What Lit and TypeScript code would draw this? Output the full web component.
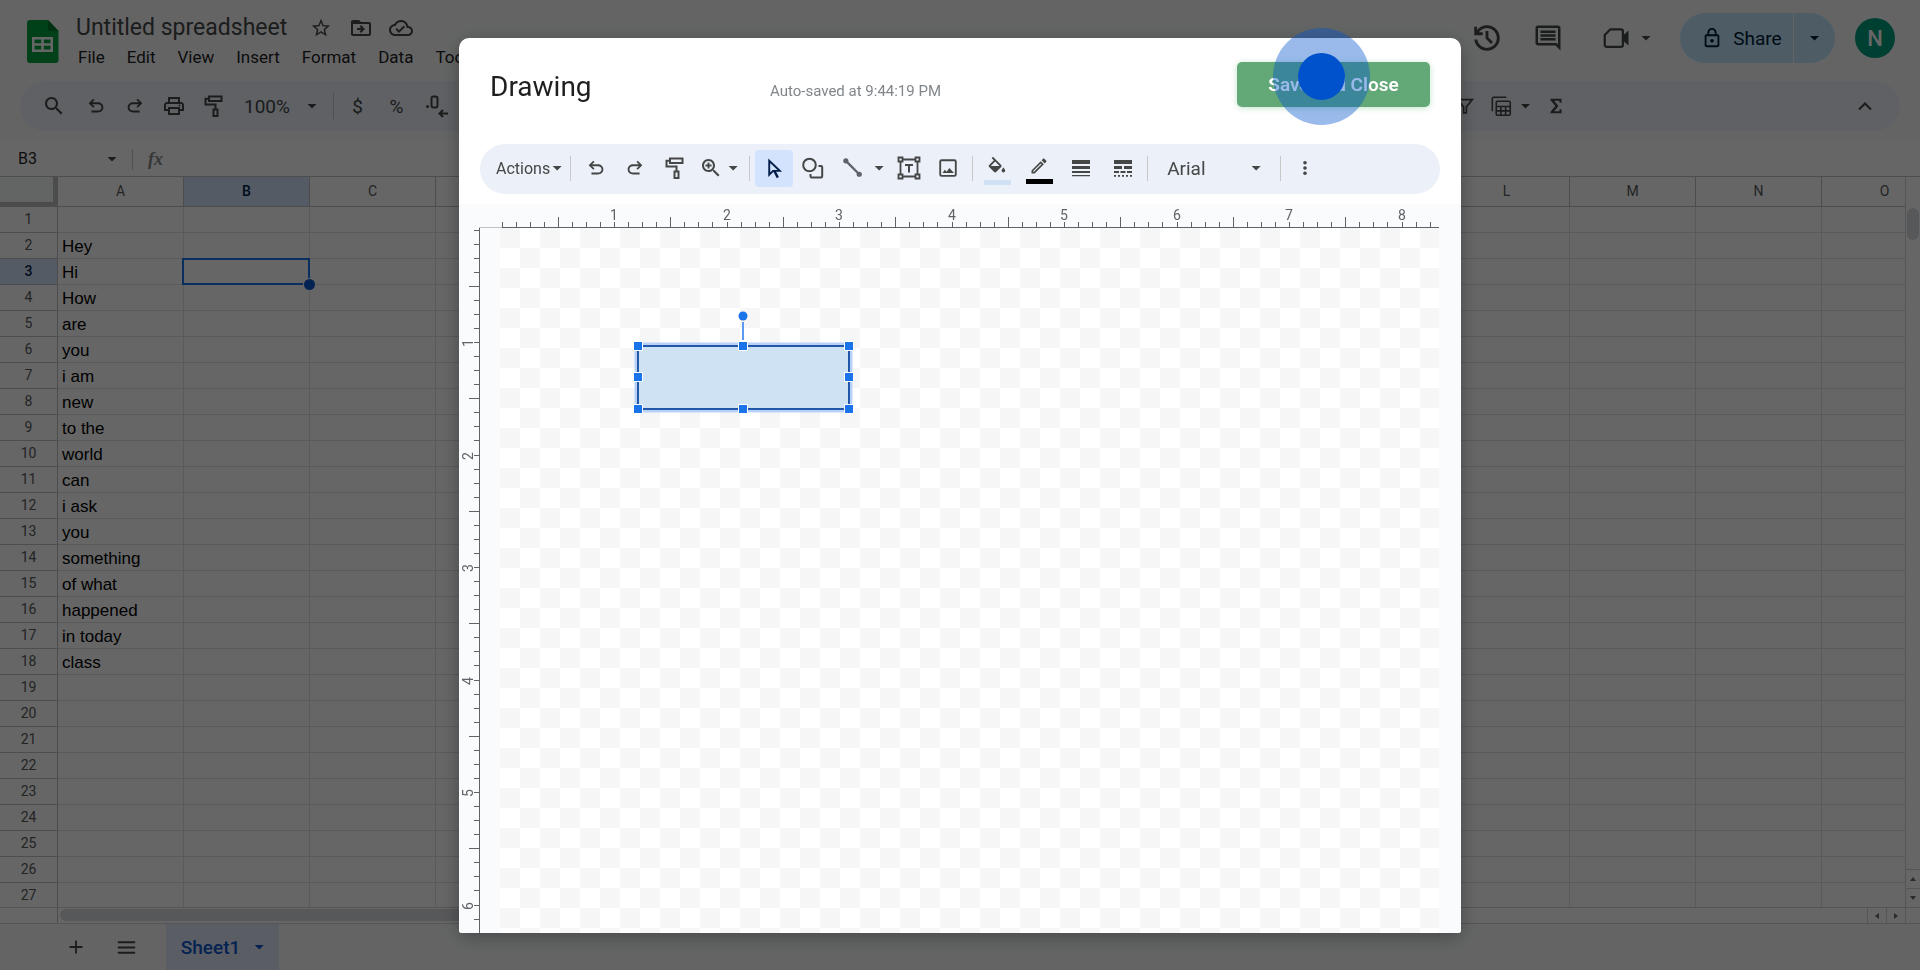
import { LitElement, html, css, svg, nothing } from "lit";
import { customElement, property } from "lit/decorators.js";
import { classMap } from "lit/directives/class-map.js";

const SEARCH =
  "M15.5 14h-.79l-.28-.27C15.41 12.59 16 11.11 16 9.5 16 5.91 13.09 3 9.5 3S3 5.91 3 9.5 5.91 16 9.5 16c1.61 0 3.09-.59 4.23-1.57l.27.28v.79l5 4.99L20.49 19l-4.99-5zm-6 0C7.01 14 5 11.99 5 9.5S7.01 5 9.5 5 14 7.01 14 9.5 11.99 14 9.5 14z";
const UNDO =
  "M7 19v-2h7.1c1.05 0 1.96-.33 2.74-1s1.16-1.5 1.16-2.5-.39-1.83-1.16-2.5-1.69-1-2.74-1H7.8l2.6 2.6L9 14 4 9l5-5 1.4 1.4L7.8 8h6.3c1.62 0 3 .53 4.16 1.575S20 11.933 20 13.5s-.58 2.88-1.74 3.925S15.72 19 14.1 19z";

const ICONS: Record<string, unknown> = {
  search: svg`<path d=${SEARCH} />`,
  zoomIn: svg`<path d=${SEARCH} /><path d="M8.6 6.5h1.8v2.1h2.1v1.8h-2.1v2.1H8.6v-2.1H6.500V8.600h2.100z" />`,
  undo: svg`<path d=${UNDO} />`,
  redo: svg`<path d=${UNDO} transform="matrix(-1 0 0 1 24 0)" />`,
  print: svg`<path d="M19 8h-1V3H6v5H5c-1.66 0-3 1.34-3 3v6h4v4h12v-4h4v-6c0-1.66-1.34-3-3-3zM8 5h8v3H8V5zm8 12v2H8v-4h8v2zm2-2v-2H6v2H4v-4c0-.55.45-1 1-1h14c.55 0 1 .45 1 1v4h-2z" /><circle cx="17.500" cy="11.500" r="1" />`,
  paint: svg`<g fill="none" stroke="currentColor" stroke-width="2"><path d="M8 2.500h12.500v4.500H8z" /><path d="M8 4.700H4.500V10.500h10V15" /><path d="M12.500 15.500h4v6.500h-4z" /></g>`,
  star: svg`<path d="M22 9.24l-7.19-.62L12 2 9.19 8.63 2 9.24l5.46 4.73L5.82 21 12 17.27 18.18 21l-1.63-7.03L22 9.24zM12 15.400l-3.760 2.270 1-4.280-3.320-2.880 4.380-.380L12 6.100l1.710 4.040 4.380.380-3.320 2.880 1 4.280L12 15.400z" />`,
  move: svg`<path d="M20 6h-8l-2-2H4c-1.100 0-2 .9-2 2v12c0 1.100.9 2 2 2h16c1.100 0 2-.9 2-2V8c0-1.100-.9-2-2-2zm0 12H4V8h16v10z" /><path d="M12.160 12H8v2h4.160l-1.590 1.590L11.990 17 16 13.010 11.990 9l-1.410 1.410L12.160 12z" />`,
  cloud: svg`<path d="M19.350 10.040C18.670 6.590 15.640 4 12 4 9.110 4 6.600 5.640 5.350 8.040 2.340 8.360 0 10.910 0 14c0 3.310 2.690 6 6 6h13c2.760 0 5-2.240 5-5 0-2.640-2.050-4.780-4.650-4.960zM19 18H6c-2.210 0-4-1.790-4-4 0-2.050 1.530-3.760 3.560-3.970l1.070-.11.5-.95C8.080 7.140 9.940 6 12 6c2.620 0 4.880 1.860 5.390 4.430l.3 1.500 1.530.11c1.560.1 2.780 1.410 2.780 2.960 0 1.650-1.350 3-3 3z" /><path d="M10 14.180l-2.090-2.090L6.500 13.500 10 17l6.010-6.010-1.410-1.410z" />`,
  history: svg`<path d="M12 21q-3.45 0-6.0125-2.2875T3.05 13H5.1q.35 2.6 2.3125 4.3T12 19q2.925 0 4.9625-2.0375T19 12t-2.0375-4.9625T12 5q-1.725 0-3.225.8T6.25 8H9v2H3V4h2v2.35q1.275-1.6 3.1125-2.475T12 3q1.875 0 3.5125.7125t2.85 1.925 1.925 2.85T21 12t-.7125 3.5125-1.925 2.85-2.85 1.925T12 21Zm2.8-4.8L11 12.4V7h2v4.6l3.2 3.2-1.4 1.4Z" />`,
  comment: svg`<path d="M21.990 4c0-1.100-.89-2-1.990-2H4c-1.100 0-2 .9-2 2v12c0 1.100.9 2 2 2h14l4 4-.010-18zM20 4v13.170L18.830 16H4V4h16zM6 12h12v2H6zm0-3h12v2H6zm0-3h12v2H6z" />`,
  video: svg`<path d="M7.500 5H16a1.500 1.500 0 0 1 1.500 1.500v11A1.500 1.500 0 0 1 16 19H4.500A1.500 1.500 0 0 1 3 17.500V9.500z" fill="none" stroke="currentColor" stroke-width="1.800" /><path d="M17 10.500l5-4.500v12l-5-4.500z" />`,
  lock: svg`<path d="M18 8h-1V6c0-2.760-2.240-5-5-5S7 3.240 7 6v2H6c-1.100 0-2 .9-2 2v10c0 1.100.9 2 2 2h12c1.100 0 2-.9 2-2V10c0-1.100-.9-2-2-2zM9 6c0-1.660 1.340-3 3-3s3 1.340 3 3v2H9V6zm9 14H6V10h12v10zm-6-3c1.100 0 2-.9 2-2s-.9-2-2-2-2 .9-2 2 .9 2 2 2z" />`,
  decrease: svg`<circle cx="3.500" cy="12.500" r="1.500" /><path d="M9.500 2.500h2a2 2 0 0 1 2 2v7a2 2 0 0 1-2 2h-2a2 2 0 0 1-2-2v-7a2 2 0 0 1 2-2z" fill="none" stroke="currentColor" stroke-width="2" /><path d="M24 19.500h-8M19 16l-3.500 3.500L19 23" fill="none" stroke="currentColor" stroke-width="2" />`,
  filter: svg`<path d="M4 5h16l-6.500 8v6.500h-3V13z" fill="none" stroke="currentColor" stroke-width="1.800" />`,
  calc: svg`<g fill="none" stroke="currentColor" stroke-width="1.800"><path d="M1.500 17.500V3a1.500 1.500 0 0 1 1.500-1.500h14.500" /><rect x="6" y="6" width="16" height="16" rx="1.500" /><path d="M6 12h16M6 17h16M11.300 12v10M16.700 12v10" /></g>`,
  sigma: svg`<path d="M6 4h12v4.500h-2.200V6.300H10l4.700 5.700L10 17.700h5.800v-2.200H18V20H6v-1.800l5.300-6.200L6 5.800z" />`,
  up: svg`<path d="M6 15.500l6-6 6 6" fill="none" stroke="currentColor" stroke-width="2" />`,
  plus: svg`<path d="M11 5h2v6h6v2h-6v6h-2v-6H5v-2h6z" />`,
  bars: svg`<path d="M3 5.500h18v2H3zM3 11h18v2H3zM3 16.500h18v2H3z" />`,
  cursor: svg`<path d="M6.500 4v14.500l4-4h7z" fill="none" stroke="currentColor" stroke-width="2" /><path d="M11.500 14l4 7.500" stroke="currentColor" stroke-width="2.500" />`,
  shapes: svg`<g fill="none" stroke="currentColor" stroke-width="2"><circle cx="8.500" cy="9" r="6.300" /><path d="M17.500 10H20a1.200 1.200 0 0 1 1.200 1.200v9a1.200 1.200 0 0 1-1.200 1.200H10.700a1.200 1.200 0 0 1-1.200-1.200V18" /></g>`,
  line: svg`<g fill="#5f6368"><circle cx="4" cy="4" r="2.700" /><circle cx="18" cy="18" r="2.700" /><path d="M4 4l14 14" stroke="#5f6368" stroke-width="2.400" /></g>`,
  textbox: svg`<g fill="none" stroke="currentColor" stroke-width="1.800"><path d="M5.500 3.500h13M5.500 20.500h13M3.500 5.500v13M20.500 5.500v13" /><path d="M1.500 1.500h4v4h-4zM18.500 1.500h4v4h-4zM1.500 18.500h4v4h-4zM18.500 18.500h4v4h-4z" /></g><path d="M8 8h8v2h-3v6.500h-2V10H8z" />`,
  image: svg`<rect x="3.500" y="3.500" width="17" height="17" rx="1.500" fill="none" stroke="currentColor" stroke-width="2" /><path d="M6 17.500l2.500-3.500 2 2 3-4 5 5.500z" />`,
  fill: svg`<path transform="translate(0 2)" d="M16.560 8.940L7.620 0 6.210 1.410l2.380 2.380-5.150 5.150c-.59.59-.59 1.540 0 2.120l5.500 5.500c.29.29.68.44 1.060.44s.77-.15 1.060-.44l5.500-5.500c.59-.58.59-1.530 0-2.120zM5.210 10L10 5.210 14.790 10H5.210zM19 11.500s-2 2.170-2 3.500c0 1.100.9 2 2 2s2-.9 2-2c0-1.330-2-3.500-2-3.500z" />`,
  pen: svg`<path d="M14.060 9.020l.92.92L5.920 19H5v-.92l9.060-9.060M17.660 3c-.25 0-.51.1-.7.29l-1.830 1.830 3.750 3.750 1.830-1.830c.39-.39.39-1.020 0-1.410l-2.340-2.340c-.2-.2-.45-.29-.71-.29zm-3.600 3.190L3 17.250V21h3.750L17.810 9.940l-3.750-3.750z" />`,
  weight: svg`<path d="M3 4h18v4H3zM3 10h18v3H3zM3 15h18v2H3zM3 19h18v1.200H3z" />`,
  dash: svg`<path d="M3 4h18v4H3zM3 10h8v3H3zM13 10h8v3h-8zM3 15h5v2H3zM9.500 15h5v2h-5zM16 15h5v2h-5zM3 19h2v1.700H3zM7 19h2v1.700H7zM11 19h2v1.700h-2zM15 19h2v1.700h-2zM19 19h2v1.700h-2z" />`,
  dots: svg`<circle cx="12" cy="5" r="2.400" /><circle cx="12" cy="12" r="2.400" /><circle cx="12" cy="19" r="2.400" />`,
};

const icon = (name: string, size = 24) =>
  html`<svg width=${size} height=${size} viewBox="0 0 24 24" fill="currentColor" aria-hidden="true">${ICONS[name]}</svg>`;

const shared = css`
  * {
    box-sizing: border-box;
  }
  button,
  input,
  select {
    margin: 0;
    padding: 0;
    border: 0;
    background: none;
    color: inherit;
    font: inherit;
    border-radius: 0;
  }
  button {
    display: inline-flex;
    align-items: center;
    justify-content: center;
    cursor: pointer;
  }
  svg {
    display: block;
    flex: none;
  }
  select {
    appearance: none;
    cursor: pointer;
  }
  .caret {
    flex: none;
    width: 10px;
    height: 5px;
    background: currentColor;
    clip-path: polygon(0 0, 100% 0, 50% 100%);
    pointer-events: none;
  }
  .divider {
    flex: none;
    width: 1px;
    background: #c7c7c7;
  }
  .pick {
    display: inline-flex;
    align-items: center;
  }
`;

const CELLS = [
  "", "Hey", "Hi", "How", "are", "you", "i am", "new", "to the", "world", "can", "i ask",
  "you", "something", "of what", "happened", "in today", "class", "", "", "", "", "", "", "", "", "",
];
const COLUMNS = "ABCDEFGHIJKLMNO".split("");

@customElement("sheet-header")
class SheetHeader extends LitElement {
  static styles = [
    shared,
    css`
      :host {
        display: block;
        color: #444746;
      }
      .top {
        display: flex;
        height: 81px;
        padding: 0 25px 0 23px;
      }
      .logo {
        padding-top: 20px;
        width: 53px;
      }
      .names {
        padding-top: 13px;
      }
      .title-row {
        display: flex;
        align-items: center;
        height: 30px;
        gap: 16px;
      }
      .title {
        width: 217px;
        font-size: 23px;
        line-height: 28px;
      }
      .title-row button {
        width: 24px;
        height: 24px;
      }
      .menus {
        display: flex;
        gap: 22px;
        padding-left: 2px;
        color: #1f1f1f;
        font-size: 17px;
        line-height: 28px;
      }
      .tools {
        display: flex;
        align-items: center;
        margin-left: auto;
        height: 50px;
        margin-top: 13px;
      }
      .history {
        margin-right: 29px;
      }
      .comments {
        margin-right: 38px;
      }
      .meet {
        gap: 10px;
        margin-right: 29px;
      }
      .share {
        display: flex;
        height: 50px;
        border-radius: 25px;
        overflow: hidden;
        color: #001d35;
        margin-right: 20px;
        gap: 1px;
        font-size: 19px;
      }
      .share button {
        background: #c2e7ff;
      }
      .share-main {
        gap: 10px;
        width: 113px;
        padding-left: 10px;
      }
      .share-more {
        width: 41px;
      }
      .avatar {
        width: 40px;
        height: 40px;
        border-radius: 50%;
        background: #00a080;
        color: #fff;
        font-size: 22px;
        font-weight: 500;
      }
      .bar {
        display: flex;
        align-items: center;
        height: 50px;
        margin: 0 20px;
        padding: 0 16px 0 14px;
        border-radius: 25px;
        background: #edf2fa;
        font-size: 19px;
      }
      .bar button {
        width: 39px;
        height: 36px;
      }
      .bar .find {
        margin-right: 3px;
      }
      .zoom {
        margin-left: 12px;
      }
      .zoom select {
        width: 63px;
      }
      .bar .divider {
        height: 26px;
        margin: 0 4px 0 16px;
      }
      .bar .group {
        display: flex;
        align-items: center;
        margin-left: auto;
        width: 439px;
      }
      .bar .more {
        width: 44px;
        gap: 9px;
        margin-right: 8px;
        padding-left: 9px;
      }
      .bar .collapse {
        margin-left: auto;
      }
      .formula {
        display: flex;
        align-items: center;
        height: 36px;
        margin-top: 9px;
        background: #fff;
        padding: 2px 0 0 18px;
      }
      .cell-name {
        width: 89px;
        color: #1f1f1f;
        font-size: 16px;
        line-height: 20px;
      }
      .formula .divider {
        height: 21px;
        margin: 0 15px;
      }
      .fx {
        font: italic 700 18px/20px "Liberation Serif", serif;
        color: #8a8a8a;
      }
      .entry {
        flex: 1;
        margin-left: 10px;
      }
    `,
  ];

  render() {
    return html`
      <header class="top">
        <div class="logo">
          <svg width="40" height="44" viewBox="0 0 40 44" aria-hidden="true">
            <path d="M7 0h18l10.500 11v29a3 3 0 0 1-3 3H7a3 3 0 0 1-3-3V3a3 3 0 0 1 3-3z" fill="#00a33f" />
            <path d="M25 0l10.500 11H25z" fill="#007a2c" />
            <path d="M9 17h21v15H9zM11.500 19.500v3.800h6.700v-3.800zM20.800 19.500v3.800h6.700v-3.800zM11.500 25.800v3.700h6.700v-3.700zM20.800 25.800v3.700h6.700v-3.700z" fill="#fff" fill-rule="evenodd" />
          </svg>
        </div>
        <div class="names">
          <div class="title-row">
            <input class="title" aria-label="Rename" value="Untitled spreadsheet" />
            <button aria-label="Star">${icon("star", 22)}</button>
            <button aria-label="Move">${icon("move")}</button>
            <button aria-label="Document status">${icon("cloud")}</button>
          </div>
          <nav class="menus">
            ${["File", "Edit", "View", "Insert", "Format", "Data", "Tools"].map((m) => html`<button>${m}</button>`)}
          </nav>
        </div>
        <div class="tools">
          <button class="history" aria-label="Version history">${icon("history", 34)}</button>
          <button class="comments" aria-label="Comments">${icon("comment", 30)}</button>
          <button class="meet" aria-label="Join a call">${icon("video", 30)}<span class="caret"></span></button>
          <div class="share">
            <button class="share-main">${icon("lock", 22)}Share</button>
            <button class="share-more" aria-label="Share options"><span class="caret"></span></button>
          </div>
          <button class="avatar" aria-label="Account">N</button>
        </div>
      </header>
      <div class="bar" role="toolbar">
        <button class="find" aria-label="Search">${icon("search")}</button>
        <button aria-label="Undo">${icon("undo", 22)}</button>
        <button aria-label="Redo">${icon("redo", 22)}</button>
        <button aria-label="Print">${icon("print")}</button>
        <button aria-label="Paint format">${icon("paint")}</button>
        <span class="pick zoom">
          <select aria-label="Zoom"><option>100%</option></select><span class="caret"></span>
        </span>
        <span class="divider"></span>
        <button aria-label="Currency">$</button>
        <button aria-label="Percent">%</button>
        <button aria-label="Fewer decimals">${icon("decrease")}</button>
        <div class="group">
          <button aria-label="Filter">${icon("filter", 22)}</button>
          <button class="more" aria-label="Filter views">${icon("calc", 21)}<span class="caret"></span></button>
          <button aria-label="Functions">${icon("sigma", 22)}</button>
          <button class="collapse" aria-label="Hide the menus">${icon("up")}</button>
        </div>
      </div>
      <div class="formula">
        <input class="cell-name" aria-label="Name box" value="B3" /><span class="caret"></span>
        <span class="divider"></span>
        <span class="fx">fx</span>
        <input class="entry" aria-label="Formula" />
      </div>
    `;
  }
}

@customElement("sheet-grid")
class SheetGrid extends LitElement {
  static styles = [
    shared,
    css`
      :host {
        display: grid;
        grid-template-columns: minmax(0, 1fr) 15px;
        grid-template-rows: minmax(0, 1fr) 16px;
        border-top: 1px solid #c0c0c0;
        background: #fff;
        overflow: hidden;
      }
      .view {
        overflow: hidden;
      }
      table {
        table-layout: fixed;
        width: 1948px;
        border-collapse: separate;
        border-spacing: 0;
      }
      th,
      td {
        padding: 0;
        border-right: 1px solid #e1e1e1;
        border-bottom: 1px solid #e1e1e1;
      }
      th {
        border-color: #c0c0c0;
        color: #575a5a;
        font-size: 14px;
        font-weight: 400;
        text-align: center;
      }
      .side {
        width: 58px;
      }
      thead th {
        height: 30px;
        padding-bottom: 2px;
      }
      tbody tr {
        height: 26px;
      }
      tbody th {
        padding-bottom: 2px;
        line-height: 16px;
      }
      td {
        position: relative;
        padding: 2px 0 1px 4px;
        font: 17px/19px "Liberation Sans", Arial, sans-serif;
        color: #000;
        height: 26px;
        white-space: nowrap;
      }
      .corner {
        background: #f8f9fa;
        border-right: 5px solid #bdbdbd;
        border-bottom: 5px solid #bdbdbd;
      }
      th.on {
        background: #d3e3fd;
        color: #041e49;
        font-weight: 500;
      }
      .active {
        position: absolute;
        z-index: 1;
        inset: -1px -1px -1px -2px;
        border: 2px solid #1a73e8;
      }
      .active::after {
        content: "";
        position: absolute;
        right: -7px;
        bottom: -7px;
        width: 11px;
        height: 11px;
        border-radius: 50%;
        background: #0b57d0;
        box-shadow: 0 0 0 1px #fff;
      }
      .vbar {
        display: flex;
        flex-direction: column;
        border-left: 1px solid #d5d5d5;
      }
      .vbar .thumb {
        margin: 31px 1px auto;
        height: 32px;
      }
      .thumb {
        border-radius: 6px;
        background: #dadce0;
      }
      .step {
        color: #6b6b6b;
        width: 19px;
      }
      .vbar .step {
        width: 14px;
        height: 19px;
        border-top: 1px solid #d5d5d5;
      }
      .hbar {
        display: flex;
        border-top: 1px solid #d5d5d5;
      }
      .hbar .start {
        width: 58px;
        border-right: 1px solid #c0c0c0;
      }
      .hbar .thumb {
        width: 720px;
        margin: 1px auto 2px 2px;
      }
      .hbar .step,
      .end {
        border-left: 1px solid #d5d5d5;
      }
      .end {
        border-top: 1px solid #d5d5d5;
      }
    `,
  ];

  private step(points: string, label: string) {
    return html`<button class="step" aria-label=${label}>
      <svg width="8" height="8" viewBox="0 0 8 8" fill="currentColor"><path d=${points} /></svg>
    </button>`;
  }

  render() {
    return html`
      <div class="view">
        <table>
          <thead>
            <tr>
              <th class="side corner"></th>
              ${COLUMNS.map((c) => html`<th scope="col" class=${classMap({ on: c === "B" })}>${c}</th>`)}
            </tr>
          </thead>
          <tbody>
            ${CELLS.map(
              (text, row) => html`<tr>
                <th scope="row" class=${classMap({ on: row === 2 })}>${row + 1}</th>
                ${COLUMNS.map(
                  (_, col) =>
                    html`<td>${col === 0 ? text : nothing}${row === 2 && col === 1 ? html`<div class="active"></div>` : nothing}</td>`,
                )}
              </tr>`,
            )}
          </tbody>
        </table>
      </div>
      <div class="vbar">
        <div class="thumb"></div>
        ${this.step("M1 6h6L4 2z", "Scroll up")} ${this.step("M1 2h6L4 6z", "Scroll down")}
      </div>
      <div class="hbar">
        <div class="start"></div>
        <div class="thumb"></div>
        ${this.step("M6 1v6L2 4z", "Scroll left")} ${this.step("M2 1v6l4-3z", "Scroll right")}
      </div>
      <div class="end"></div>
    `;
  }
}

@customElement("sheet-tabs")
class SheetTabs extends LitElement {
  static styles = [
    shared,
    css`
      :host {
        display: flex;
        height: 47px;
        padding-left: 59px;
        border-top: 1px solid #d5d5d5;
        color: #444746;
      }
      .tool {
        width: 34px;
      }
      .all {
        margin: 0 23px 0 16px;
      }
      .tab {
        gap: 14px;
        width: 113px;
        height: 46px;
        background: #e1e9f7;
        color: #0b57d0;
        font-size: 19px;
        font-weight: 500;
      }
    `,
  ];

  render() {
    return html`
      <button class="tool" aria-label="Add sheet">${icon("plus", 22)}</button>
      <button class="tool all" aria-label="All sheets">${icon("bars", 23)}</button>
      <button class="tab">Sheet1<span class="caret"></span></button>
    `;
  }
}

@customElement("drawing-dialog")
class DrawingDialog extends LitElement {
  static styles = [
    shared,
    css`
      :host {
        display: flex;
        flex-direction: column;
        width: 1002px;
        max-width: 100%;
        border-radius: 10px 10px 3px 3px;
        background: #fff;
        box-shadow: 0 4px 20px rgba(0, 0, 0, 0.3);
        color: #444746;
      }
      header {
        display: flex;
        align-items: center;
        height: 106px;
        padding: 0 31px 13px;
      }
      h1 {
        flex: 0 0 280px;
        margin: 5px 0 0;
        color: #1f1f1f;
        font-size: 28px;
        line-height: 36px;
        font-weight: 400;
      }
      .status {
        margin: 13px 0 0;
        color: #80868b;
        font-family: Roboto, sans-serif;
        font-size: 15px;
        line-height: 20px;
      }
      .save-wrap {
        position: relative;
        margin-left: auto;
      }
      .save {
        width: 193px;
        height: 45px;
        border-radius: 5px;
        background: #63a877;
        box-shadow: 0 1px 6px rgba(52, 168, 83, 0.3);
        color: #fff;
        font-size: 19px;
        font-weight: 600;
      }
      .pulse {
        position: absolute;
        left: 36px;
        top: -34px;
        display: grid;
        place-items: center;
        width: 97px;
        height: 97px;
        border-radius: 50%;
        background: rgba(0, 82, 204, 0.4);
        pointer-events: none;
      }
      .pulse::after {
        content: "";
        width: 47px;
        height: 47px;
        border-radius: 50%;
        background: #0052cc;
      }
      .bar {
        display: flex;
        align-items: center;
        height: 50px;
        margin: 0 21px 10px;
        padding: 0 0 2px 16px;
        border-radius: 25px;
        background: #ecf1f9;
      }
      .bar .divider {
        height: 25px;
        margin: 0 5px;
      }
      .group {
        display: flex;
        align-items: center;
      }
      .group button {
        width: 38px;
        height: 37px;
      }
      .bar .actions {
        width: auto;
        gap: 2px;
        margin-right: 2px;
        font-size: 16px;
      }
      .group .combo {
        justify-content: flex-start;
        width: 50px;
        gap: 5px;
        padding-left: 5px;
      }
      .group .lines {
        width: 56px;
        gap: 9px;
        padding-left: 9px;
      }
      .edit-group,
      .insert-group {
        gap: 1px;
      }
      .style-group {
        gap: 4px;
      }
      .bar .selected {
        border-radius: 4px;
        background: #d3e3fd;
        color: #041e49;
      }
      .bar .ink {
        flex-direction: column;
        gap: 3px;
        height: 35px;
        padding-top: 4px;
      }
      .swatch {
        width: 27px;
        height: 5px;
        background: #cfe2f3;
      }
      .swatch.black {
        background: #000;
      }
      .font {
        margin: 0 14px;
        font-size: 19px;
      }
      .font select {
        width: 84px;
      }
      .work {
        flex: 1;
        min-height: 0;
        display: grid;
        grid-template-columns: 20px 21px minmax(0, 1fr) 22px;
        grid-template-rows: 24px minmax(0, 1fr);
        border-radius: 0 0 3px 3px;
        background: #f9fbfd;
        overflow: hidden;
      }
      .ruler {
        width: 100%;
        height: 100%;
        overflow: hidden;
        font-size: 14px;
        fill: #5f6368;
      }
      .across {
        grid-column: 2 / 4;
        grid-row: 1;
      }
      .down {
        grid-column: 1 / 3;
        grid-row: 2;
      }
      .canvas {
        position: relative;
        grid-column: 3;
        grid-row: 2;
        background: repeating-conic-gradient(#fff 0 25%, #f6f6f6 0 50%) 0 0 / 40px 40px;
      }
      .shape {
        position: absolute;
        left: 128px;
        top: 78px;
      }
    `,
  ];

  @property({ type: Number }) inch = 112.5;

  /* Eighth-inch ticks, a longer one on each half inch, a figure on each inch. */
  private ticks(count: number, vertical: boolean) {
    const origin = vertical ? 2 : 23;
    return Array.from({ length: count }, (_, i) => {
      const at = Math.floor(origin + (i * this.inch) / 8);
      const whole = i > 0 && i % 8 === 0;
      const len = i % 8 === 4 ? 10 : 5;
      if (vertical) {
        return svg`<rect x=${20 - len} y=${at} width=${len} height="1" />
          ${whole ? svg`<text transform=${`translate(14 ${at + 1}) rotate(-90)`} text-anchor="middle">${i / 8}</text>` : nothing}`;
      }
      return svg`<rect x=${at} y=${23 - len} width="1" height=${len} />
        ${whole ? svg`<text x=${at} y="16" text-anchor="middle">${i / 8}</text>` : nothing}`;
    });
  }

  render() {
    const handles = [
      [10, 40], [115, 40], [221, 40], [10, 71], [221, 71], [10, 103], [115, 103], [221, 103],
    ];
    return html`
      <header>
        <h1>Drawing</h1>
        <p class="status">Auto-saved at 9:44:19 PM</p>
        <div class="save-wrap">
          <button class="save">Save and Close</button>
          <div class="pulse"></div>
        </div>
      </header>
      <div class="bar" role="toolbar">
        <div class="group edit-group">
          <button class="actions">Actions<span class="caret"></span></button>
          <span class="divider"></span>
          <button aria-label="Undo">${icon("undo", 22)}</button>
          <button aria-label="Redo">${icon("redo", 22)}</button>
          <button aria-label="Paint format">${icon("paint")}</button>
          <button class="combo" aria-label="Zoom">${icon("zoomIn")}<span class="caret"></span></button>
        </div>
        <span class="divider"></span>
        <div class="group insert-group">
          <button class="selected" aria-label="Select">${icon("cursor", 23)}</button>
          <button aria-label="Shape">${icon("shapes")}</button>
          <button class="combo lines" aria-label="Line">${icon("line", 23)}<span class="caret"></span></button>
          <button aria-label="Text box">${icon("textbox")}</button>
          <button aria-label="Image">${icon("image", 22)}</button>
        </div>
        <span class="divider"></span>
        <div class="group style-group">
          <button class="ink" aria-label="Fill color">${icon("fill", 22)}<span class="swatch"></span></button>
          <button class="ink" aria-label="Border color">${icon("pen", 20)}<span class="swatch black"></span></button>
          <button aria-label="Border weight">${icon("weight")}</button>
          <button aria-label="Border dash">${icon("dash")}</button>
        </div>
        <span class="divider"></span>
        <span class="pick font">
          <select aria-label="Font"><option>Arial</option></select><span class="caret"></span>
        </span>
        <span class="divider"></span>
        <div class="group">
          <button aria-label="More">${icon("dots", 18)}</button>
        </div>
      </div>
      <div class="work">
        <svg class="ruler across" aria-hidden="true">
          <rect x="0" y="23" width="23" height="1" fill="#c0c2c4" />
          <rect x="23" y="23" width="100%" height="1" />
          ${this.ticks(67, false)}
        </svg>
        <svg class="ruler down" aria-hidden="true">
          <rect x="20" y="0" width="1" height="100%" />
          ${this.ticks(50, true)}
        </svg>
        <div class="canvas">
          <svg class="shape" width="232" height="114" viewBox="0 0 232 114" role="img" aria-label="Rectangle">
            <rect x="10" y="40" width="211" height="63" fill="#cfe2f3" stroke="#b9d1f8" stroke-width="7" />
            <rect x="10" y="40" width="211" height="63" fill="#cfe2f3" stroke="#2358a8" stroke-width="2" />
            <path d="M115 16v18" stroke="#5b9bf0" stroke-width="2" />
            <circle cx="115" cy="10" r="4.500" fill="#1a73e8" />
            ${handles.map(
              ([x, y]) =>
                svg`<rect x=${x - 4.5} y=${y - 4.5} width="9" height="9" fill="#1a73e8" stroke="#fff" stroke-width="1" />`,
            )}
          </svg>
        </div>
      </div>
    `;
  }
}

@customElement("app-root")
class AppRoot extends LitElement {
  static styles = [
    shared,
    css`
      :host {
        display: flex;
        flex-direction: column;
        height: 100vh;
        overflow: hidden;
        background: #f9fbfd;
        font-family: Roboto, "Open Sans", sans-serif;
      }
      sheet-grid {
        flex: 1;
        min-height: 0;
      }
      .scrim {
        position: fixed;
        z-index: 2;
        inset: 0;
        display: flex;
        justify-content: center;
        padding: 38px 0 37px;
        background: rgba(0, 0, 0, 0.6);
      }
    `,
  ];

  render() {
    return html`
      <sheet-header></sheet-header>
      <sheet-grid></sheet-grid>
      <sheet-tabs></sheet-tabs>
      <div class="scrim"><drawing-dialog role="dialog" aria-label="Drawing"></drawing-dialog></div>
    `;
  }
}
